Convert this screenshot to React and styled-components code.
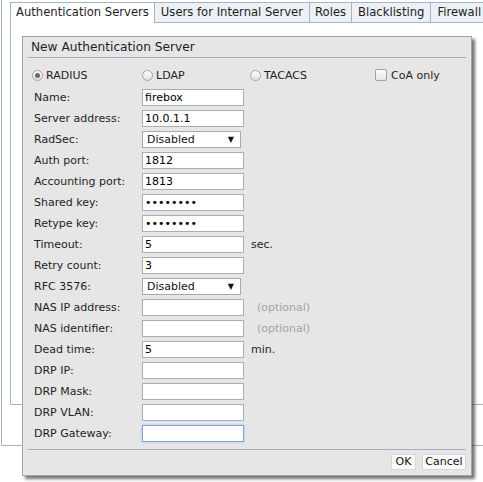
import React from 'react'
import styled, { createGlobalStyle, css } from 'styled-components'

const GlobalStyle = createGlobalStyle`
  html, body {
    margin: 0;
    padding: 0;
    background: #fff;
    overflow: hidden;
  }
  body {
    font-family: "DejaVu Sans", Verdana, sans-serif;
    font-size: 11px;
    color: #222;
  }
`

const lineColor = '#a6b5c4'

const Screen = styled.div`
  position: relative;
  width: 483px;
  height: 482px;
  overflow: hidden;
`

const OuterPanel = styled.div`
  margin-left: 1px;
  width: 640px;
  height: 446px;
  box-sizing: border-box;
  border-left: 1px solid ${lineColor};
  border-bottom: 1px solid ${lineColor};
  padding: 2px 0 0 8px;
`

const TabBar = styled.div`
  display: flex;
  height: 20px;
  position: relative;
  z-index: 1;
`

const Tab = styled.div`
  box-sizing: border-box;
  height: 21px;
  line-height: 19px;
  padding: 0 ${p => p.$pad}px;
  font-size: 11.6px;
  white-space: nowrap;
  color: #1e1e1e;
  border: 1px solid ${lineColor};
  margin-left: -1px;
  background: #edf1f5;
  &:first-child {
    margin-left: 0;
  }
  ${p => p.$active && css`
    background: #fff;
    border-bottom-color: #fff;
  `}
`

const TabPanel = styled.div`
  box-sizing: border-box;
  height: 383px;
  border: 1px solid ${lineColor};
  border-right: none;
  background: #fff;
`

const Dialog = styled.div`
  position: absolute;
  left: 22px;
  top: 36px;
  width: 450px;
  height: 440px;
  box-sizing: border-box;
  background: #e6e6e6;
  border: 1px solid #a4a4a4;
  box-shadow: 3px 3px 3px rgba(0, 0, 0, 0.55);
  display: flex;
  flex-direction: column;
`

const Header = styled.div`
  margin: 0 5px;
  height: 20px;
  line-height: 20px;
  padding-left: 3px;
  font-size: 12.2px;
  color: #1e1e1e;
  border-bottom: 1px solid #9fb1c2;
`

const RadioRow = styled.div`
  display: grid;
  grid-template-columns: 110px 108px 125px auto;
  margin-top: 9px;
  padding-left: 9px;
  height: 16px;
  align-items: center;
`

const Choice = styled.label`
  display: flex;
  align-items: center;
  gap: 3px;
  color: #1e1e1e;
`

const Radio = styled.span`
  position: relative;
  width: 11px;
  height: 11px;
  box-sizing: border-box;
  border-radius: 50%;
  border: 1px solid #a3a3a3;
  background: linear-gradient(#fdfdfd, #e2e2e2);
  ${p => p.$checked && css`
    &::after {
      content: '';
      position: absolute;
      left: 2px;
      top: 2px;
      width: 5px;
      height: 5px;
      border-radius: 50%;
      background: #6a6a6a;
    }
  `}
`

const Checkbox = styled.span`
  width: 12px;
  height: 12px;
  box-sizing: border-box;
  border-radius: 2px;
  border: 1px solid #a3a3a3;
  background: linear-gradient(#fdfdfd, #e6e6e6);
  margin-right: 1px;
`

const Form = styled.div`
  margin-top: 4px;
  padding-left: 11px;
`

const Row = styled.div`
  display: flex;
  align-items: center;
  height: 21px;
`

const Label = styled.span`
  width: 108px;
  color: #1e1e1e;
`

const TextInput = styled.input`
  width: 102px;
  height: 17px;
  box-sizing: border-box;
  margin: 0;
  padding: 0 2px;
  border: 1px solid #a8aeb3;
  background: #fff;
  font-family: "DejaVu Sans", Verdana, sans-serif;
  font-size: 11px;
  color: #000;
  outline: none;
  caret-color: #000;
  ${p => p.$focused && css`
    border-color: #7aa6df;
    box-shadow: 0 0 2px #9cc0ef;
  `}
`

const SelectBox = styled.div`
  width: 99px;
  height: 17px;
  box-sizing: border-box;
  border: 1px solid #a9a9a9;
  background: #fff;
  display: flex;
  align-items: center;
  justify-content: space-between;
  padding: 0 6px 0 4px;
  color: #111;
`

const Arrow = styled.span`
  font-size: 8px;
  color: #111;
`

const Unit = styled.span`
  margin-left: ${p => (p.$optional ? '13px' : '7px')};
  color: ${p => (p.$optional ? '#a3a3a3' : '#1e1e1e')};
`

const Footer = styled.div`
  margin: 5px 5px 0;
  padding-top: 4px;
  border-top: 1px solid #9fb1c2;
  display: flex;
  justify-content: flex-end;
  gap: 6px;
`

const Button = styled.button`
  height: 16px;
  width: ${p => p.$w}px;
  box-sizing: border-box;
  margin: 0;
  padding: 0;
  border: 1px solid #d6d6d6;
  background: #fbfbfb;
  font-family: "DejaVu Sans", Verdana, sans-serif;
  font-size: 11px;
  color: #111;
  line-height: 14px;
`

const rows = [
  { label: 'Name:', value: 'firebox' },
  { label: 'Server address:', value: '10.0.1.1' },
  { label: 'RadSec:', select: 'Disabled' },
  { label: 'Auth port:', value: '1812' },
  { label: 'Accounting port:', value: '1813' },
  { label: 'Shared key:', value: 'secretky', password: true },
  { label: 'Retype key:', value: 'secretky', password: true },
  { label: 'Timeout:', value: '5', unit: 'sec.' },
  { label: 'Retry count:', value: '3' },
  { label: 'RFC 3576:', select: 'Disabled' },
  { label: 'NAS IP address:', value: '', optional: true },
  { label: 'NAS identifier:', value: '', optional: true },
  { label: 'Dead time:', value: '5', unit: 'min.' },
  { label: 'DRP IP:', value: '' },
  { label: 'DRP Mask:', value: '' },
  { label: 'DRP VLAN:', value: '' },
  { label: 'DRP Gateway:', value: '', focused: true },
]

const tabs = [
  { name: 'Authentication Servers', pad: 5 },
  { name: 'Users for Internal Server', pad: 6 },
  { name: 'Roles', pad: 5 },
  { name: 'Blacklisting', pad: 6 },
  { name: 'Firewall', pad: 6 },
]

const App = () => (
  <Screen>
    <GlobalStyle />
    <OuterPanel>
      <TabBar>
        {tabs.map((t, i) => (
          <Tab key={t.name} $pad={t.pad} $active={i === 0}>{t.name}</Tab>
        ))}
      </TabBar>
      <TabPanel />
    </OuterPanel>

    <Dialog>
      <Header>New Authentication Server</Header>
      <RadioRow>
        <Choice><Radio $checked />RADIUS</Choice>
        <Choice><Radio />LDAP</Choice>
        <Choice><Radio />TACACS</Choice>
        <Choice><Checkbox />CoA only</Choice>
      </RadioRow>
      <Form>
        {rows.map(r => (
          <Row key={r.label}>
            <Label>{r.label}</Label>
            {r.select ? (
              <SelectBox>
                {r.select}
                <Arrow>▼</Arrow>
              </SelectBox>
            ) : (
              <TextInput
                type={r.password ? 'password' : 'text'}
                defaultValue={r.value}
                $focused={r.focused}
                autoFocus={r.focused}
              />
            )}
            {r.unit && <Unit>{r.unit}</Unit>}
            {r.optional && <Unit $optional>(optional)</Unit>}
          </Row>
        ))}
      </Form>
      <Footer>
        <Button $w={25}>OK</Button>
        <Button $w={44}>Cancel</Button>
      </Footer>
    </Dialog>
  </Screen>
)

export default App
